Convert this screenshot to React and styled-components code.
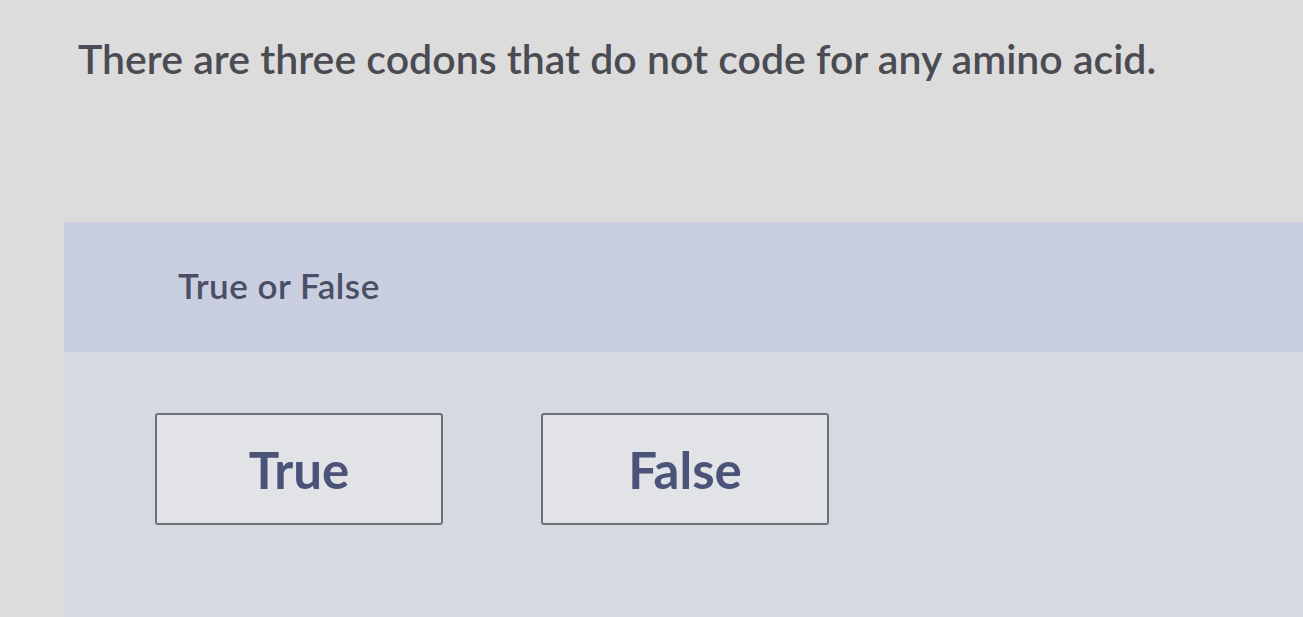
import React from 'react';
import styled, { createGlobalStyle } from 'styled-components';

const GlobalStyle = createGlobalStyle`
  html, body {
    margin: 0;
    padding: 0;
    background: #dcdcdc;
  }
  body {
    font-family: Lato, "Open Sans", "Liberation Sans", sans-serif;
    overflow: hidden;
  }
`

const Page = styled.div`
  width: 1303px;
  height: 617px;
  background: #dddcdc;
  display: flex;
  flex-direction: column;
`
const Prompt = styled.p`
  margin: 0;
  padding: 34px 0 0 78px;
  height: 222px;
  box-sizing: border-box;
  font-size: 41px;
  font-weight: 600;
  color: #4b4b53;
  letter-spacing: 0;
`
const Card = styled.section`
  flex: 1;
  margin-left: 64px;
  display: flex;
  flex-direction: column;
  background: #d5dae2;
`
const CardHeader = styled.header`
  height: 130px;
  box-sizing: border-box;
  padding: 0 0 4px 114px;
  display: flex;
  align-items: center;
  background: #c9cee0;
  font-size: 35px;
  font-weight: 600;
  color: #4a4f66;
  letter-spacing: 0.5px;
`
const Choices = styled.div`
  display: flex;
  gap: 98px;
  padding: 61px 0 0 91px;
`
const Choice = styled.button`
  width: 288px;
  height: 112px;
  box-sizing: border-box;
  border: 2px solid #707077;
  border-radius: 3px;
  background: #e2e3e6;
  font-family: inherit;
  font-size: 51px;
  font-weight: 700;
  color: #4b5478;
  cursor: pointer;
  padding: 0;
`

export default function App() {
  return (
    <Page>
      <GlobalStyle />
      <Prompt>There are three codons that do not code for any amino acid.</Prompt>
      <Card>
        <CardHeader>True or False</CardHeader>
        <Choices>
          <Choice>True</Choice>
          <Choice>False</Choice>
        </Choices>
      </Card>
    </Page>
  );
}
